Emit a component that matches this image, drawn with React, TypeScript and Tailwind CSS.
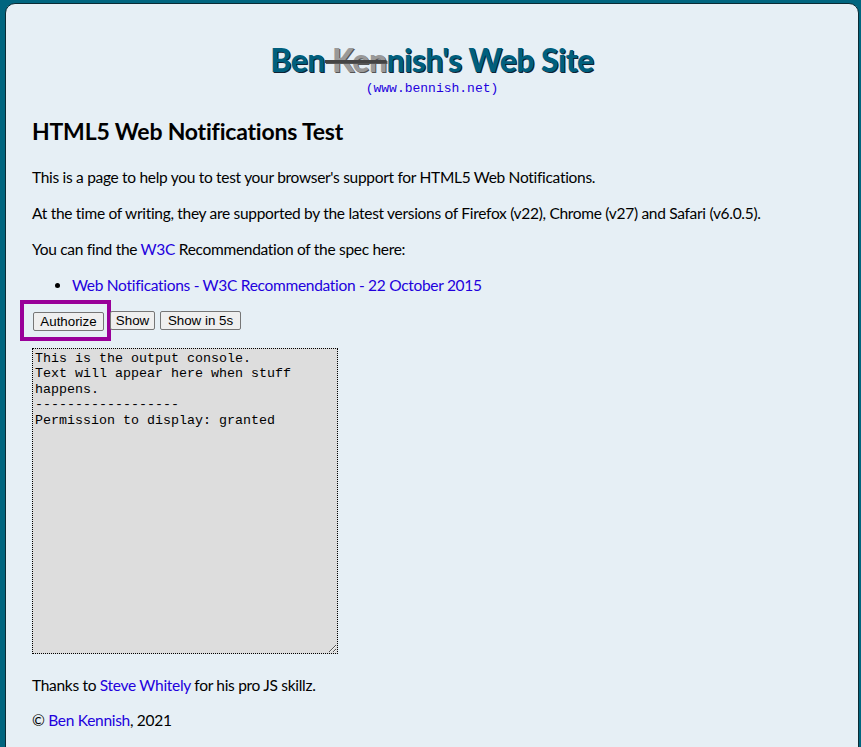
import React from 'react';

const linkCls = 'text-[#2200dd] no-underline';
const btnCls = 'h-[19px] bg-[#efefef] border border-[#767676] rounded-[2px] leading-none text-center';

export default function App() {
    return (
        <div className="min-h-[747px] bg-[#00657f] pl-[5px] pr-[2px] pt-[3px] overflow-hidden" style={{ fontFamily: 'Lato, "Noto Sans", sans-serif' }}>
            <div className="min-h-[760px] bg-[#e6eff5] border border-[#0a2a33] rounded-t-[10px] px-[26px] pt-[36px] text-[15.5px] tracking-[-0.3px] text-black">
                {/* Site header */}
                <div className="text-center">
                    <h1 className="text-[32px] leading-[40px] font-black tracking-[-0.6px] text-[#005f7d] [text-shadow:1px_1px_0_#123]">
                        Ben<span className="text-[#999999] line-through decoration-[#444] [text-shadow:1px_1px_0_#555]"> Ken</span>nish's Web Site
                    </h1>
                    <div className="mt-[1px] text-[13px] leading-[16px] tracking-normal text-[#2200dd]" style={{ fontFamily: '"Liberation Mono", monospace' }}>
                        (www.bennish.net)
                    </div>
                </div>

                <h2 className="mt-[19px] text-[23px] leading-[30px] font-bold tracking-[-0.2px]">HTML5 Web Notifications Test</h2>

                <p className="mt-[21px] leading-[20px]">This is a page to help you to test your browser's support for HTML5 Web Notifications.</p>
                <p className="mt-[16px] leading-[20px]">At the time of writing, they are supported by the latest versions of Firefox (v22), Chrome (v27) and Safari (v6.0.5).</p>
                <p className="mt-[16px] leading-[20px]">You can find the <a className={linkCls} href="#">W3C</a> Recommendation of the spec here:</p>
                <ul className="mt-[16px] pl-[40px] list-disc leading-[20px]">
                    <li><a className={linkCls} href="#">Web Notifications - W3C Recommendation - 22 October 2015</a></li>
                </ul>

                <div className="mt-[5px] flex items-center gap-[5px] text-[13.33px] tracking-normal" style={{ fontFamily: '"Liberation Sans", Arial, sans-serif' }}>
                    <div className="ml-[-12px] border-[4px] border-[#990099] pl-[9px] pr-[3px] pt-[8px] pb-[5px]">
                        <button className={`${btnCls} w-[71px]`}>Authorize</button>
                    </div>
                    <button className={`${btnCls} ml-[-6px] w-[45px]`}>Show</button>
                    <button className={`${btnCls} w-[81px]`}>Show in 5s</button>
                </div>

                <textarea
                    readOnly
                    className="block mt-[7px] w-[306px] h-[306px] bg-[#dddddd] border border-dotted border-black p-[2px] text-[13.33px] leading-[15.4px] tracking-normal text-black resize"
                    style={{ fontFamily: '"Liberation Mono", monospace' }}
                    value={'This is the output console.\nText will appear here when stuff happens.\n------------------\nPermission to display: granted'}
                />

                <p className="mt-[21px] leading-[20px]">Thanks to <a className={linkCls} href="#">Steve Whitely</a> for his pro JS skillz.</p>
                <p className="mt-[15px] leading-[20px]">© <a className={linkCls} href="#">Ben Kennish</a>, 2021</p>
            </div>
        </div>
    );
}
